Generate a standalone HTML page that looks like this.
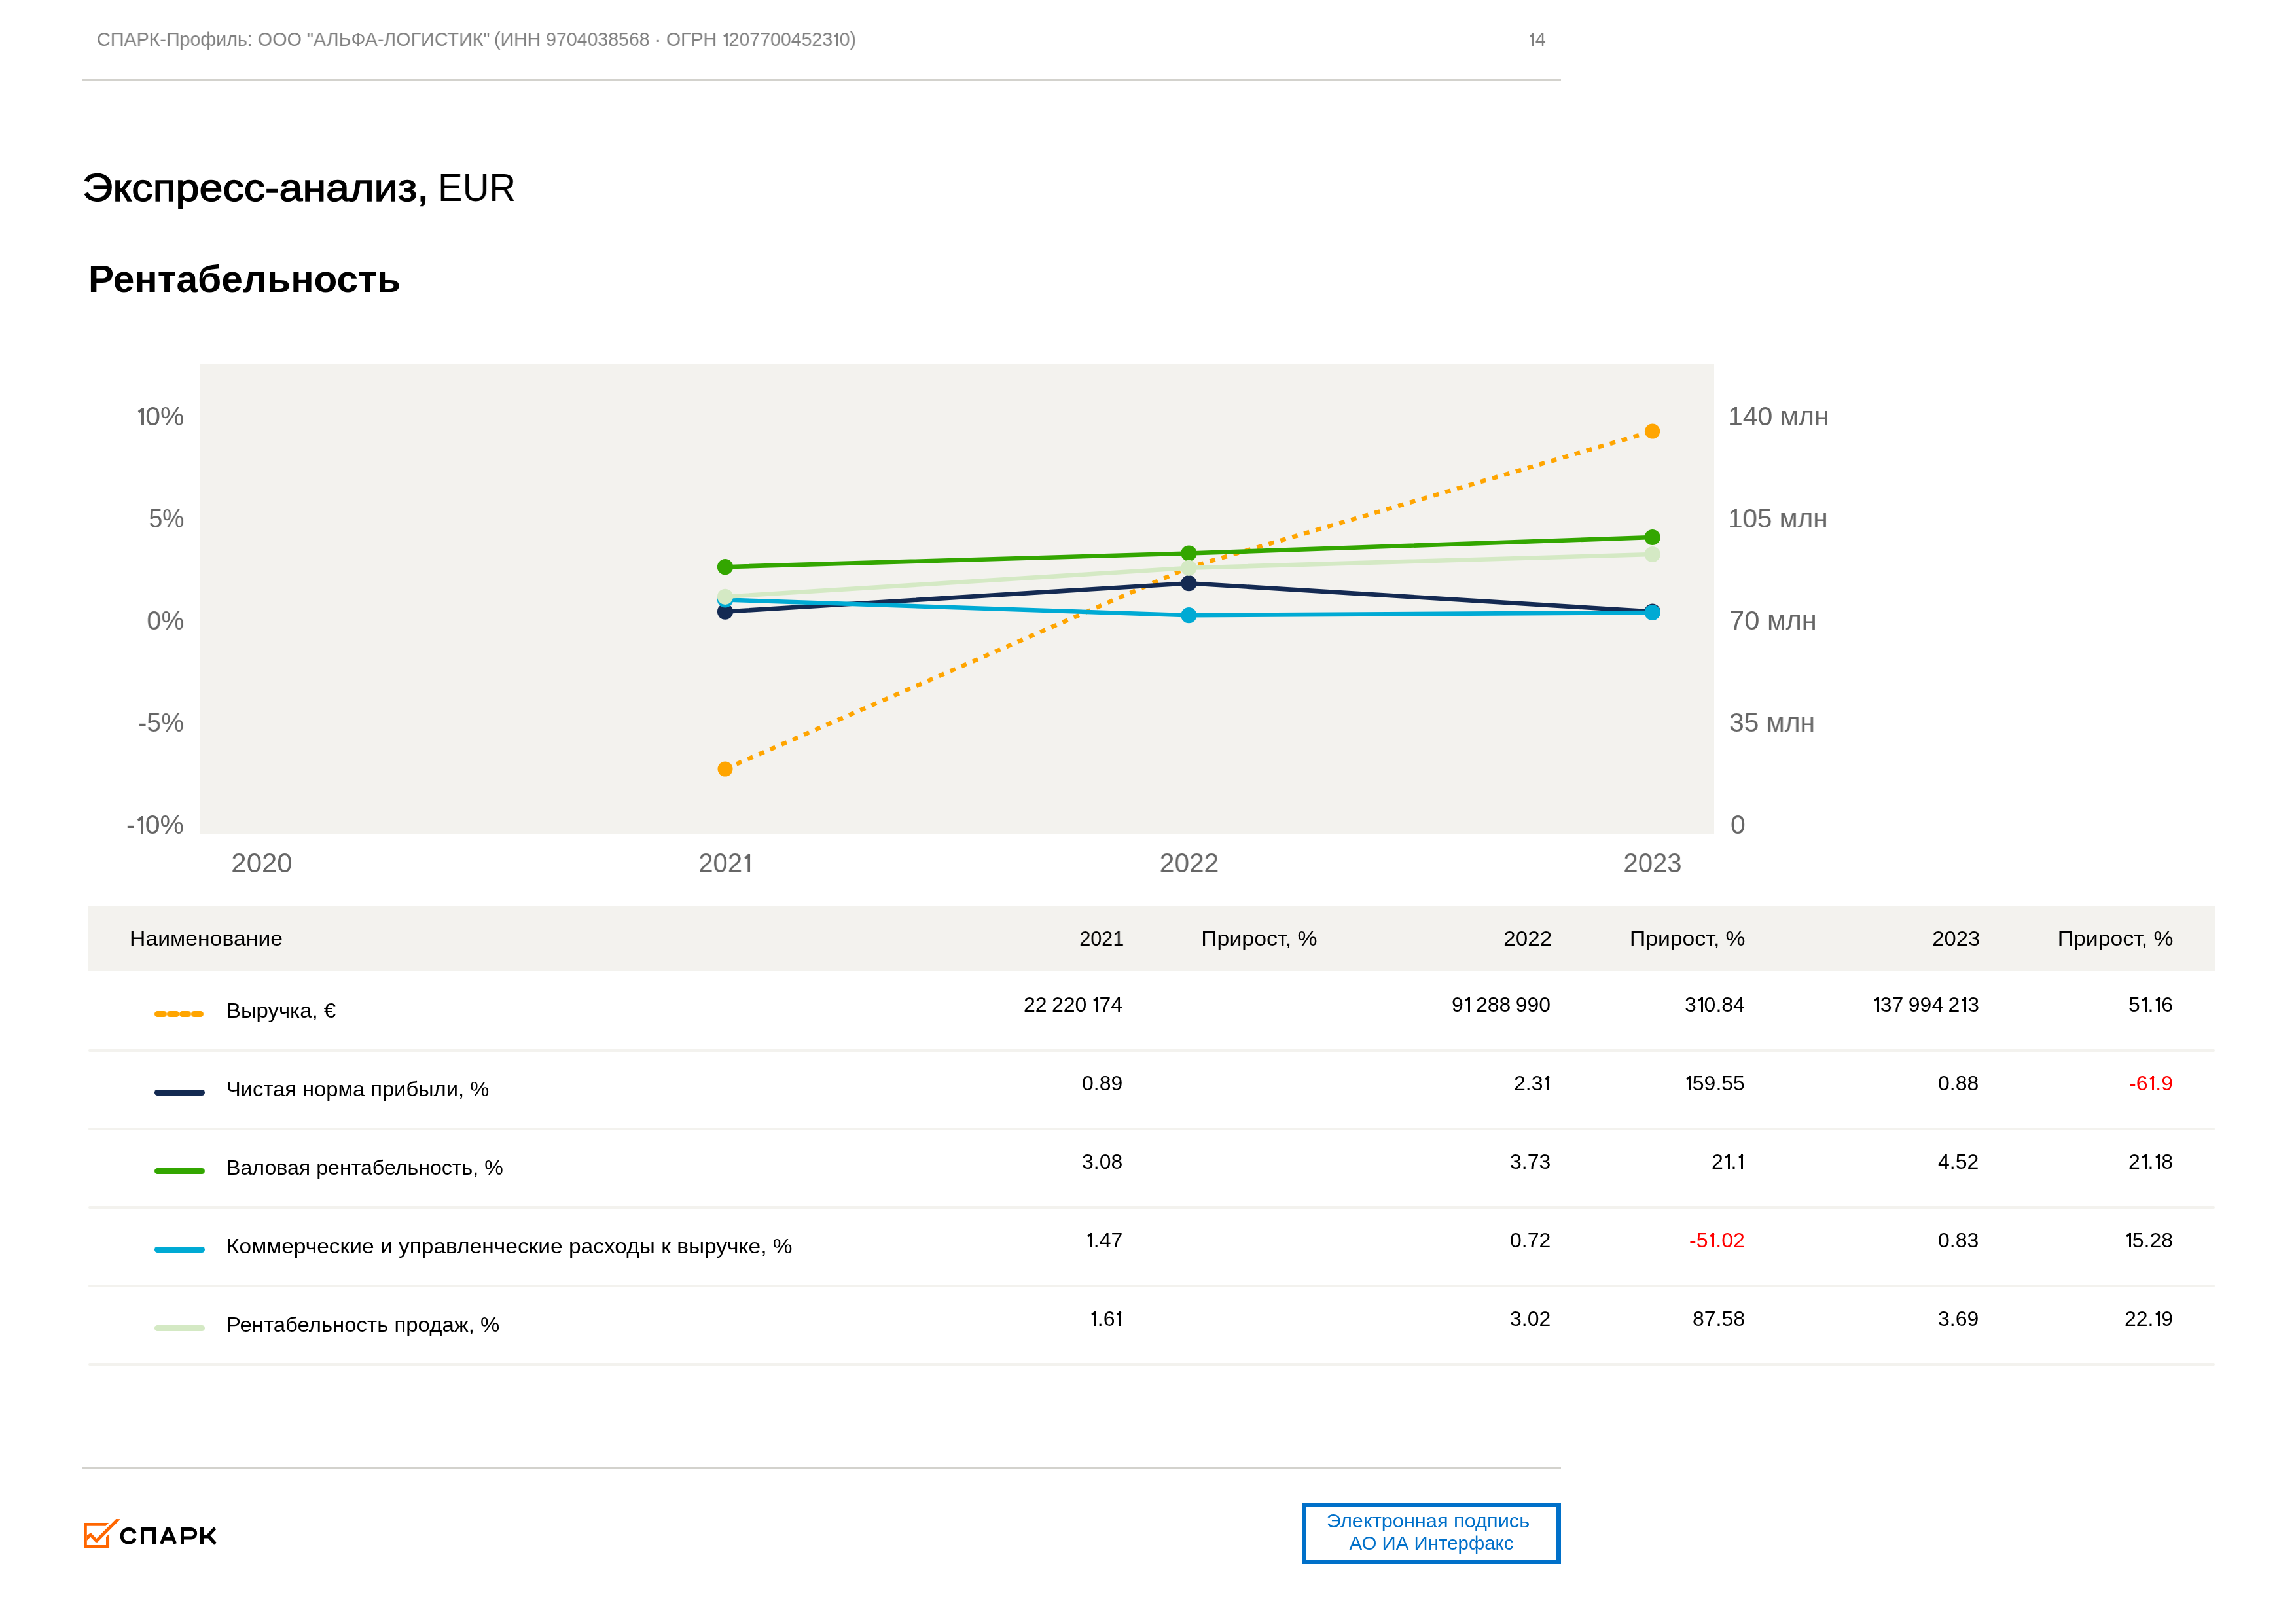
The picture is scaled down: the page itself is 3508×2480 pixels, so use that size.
<!DOCTYPE html>
<html><head><meta charset="utf-8">
<style>
html,body{margin:0;padding:0;background:#fff;}
body{width:3508px;height:2480px;position:relative;overflow:hidden;font-family:"Liberation Sans",sans-serif;}
.t{will-change:transform;position:absolute;white-space:pre;line-height:1;margin:0;}
.l{transform-origin:0 0;}
.r{transform-origin:100% 0;text-align:right;}
.c{transform-origin:50% 0;text-align:center;}
.hd{color:#808080;}
.ax{color:#666;}
.tb{color:#000;}
.neg{color:#f00;}
.sep{position:absolute;left:135px;width:3249px;height:4px;background:#f3f2ee;border-radius:2px;}
.one{display:inline-block;width:0.369em;position:relative;-webkit-text-fill-color:transparent;}.one::before{content:'';position:absolute;left:0.2156em;width:0.0969em;top:0.159em;height:0.68em;background:currentColor;}.one::after{content:'';position:absolute;left:0.0438em;top:0.159em;width:0.206em;height:0.094em;background:currentColor;transform:rotate(-36deg);transform-origin:100% 0;}
</style></head>
<body>
<div class="t l hd" style="left:148px;top:46.45px;font-size:29px;transform:scaleX(0.99)">СПАРК-Профиль: ООО "АЛЬФА-ЛОГИСТИК"</div>
<div class="t l hd" style="left:754.8px;top:46.45px;font-size:29px;transform:scaleX(0.983)">(ИНН 9704038568 · ОГРН <span class="one">1</span>2077004523<span class="one">1</span>0)</div>
<div class="t r hd" style="right:1146px;top:46.45px;font-size:29px;transform:scaleX(1.0)"><span class="one">1</span>4</div>
<div style="position:absolute;left:125px;top:121px;width:2260px;height:3px;background:#d3d2cd;"></div>
<div class="t l" style="left:126px;top:257.20px;font-size:60px;color:#000;-webkit-text-stroke:1.3px #000;transform:scaleX(1.076)">Экспресс-анализ,</div>
<div class="t l" style="left:669px;top:257.20px;font-size:60px;color:#000;transform:scaleX(0.94)">EUR</div>
<div class="t l" style="left:135px;top:396.89px;font-size:58px;font-weight:bold;color:#000;transform:scaleX(1.011)">Рентабельность</div>
<svg style="position:absolute;left:0;top:0" width="3508" height="1400" viewBox="0 0 3508 1400">
<rect x="306" y="556" width="2313" height="719" fill="#f3f2ee"/>
<polyline points="1108,1175 1816.4,867.1 2524.7,659" fill="none" stroke="#ffa500" stroke-width="6.6" stroke-dasharray="8.6 10.14"/>
<g fill="#ffa500"><circle cx="1108" cy="1175" r="11.5"/><circle cx="1816.4" cy="867.1" r="11"/><circle cx="2524.7" cy="659" r="11.5"/></g>
<polyline points="1108,934.6 1816.4,891.2 2524.7,934.5" fill="none" stroke="#142a52" stroke-width="6.6"/>
<g fill="#142a52"><circle cx="1108" cy="934.6" r="12.1"/><circle cx="1816.4" cy="891.2" r="12.1"/><circle cx="2524.7" cy="934.5" r="12.1"/></g>
<polyline points="1108,866.2 1816.4,845.5 2524.7,821" fill="none" stroke="#33a600" stroke-width="6.6"/>
<g fill="#33a600"><circle cx="1108" cy="866.2" r="12.1"/><circle cx="1816.4" cy="845.5" r="12.1"/><circle cx="2524.7" cy="821" r="12.1"/></g>
<polyline points="1108,916.5 1816.4,940.2 2524.7,936" fill="none" stroke="#00aad4" stroke-width="6.6"/>
<g fill="#00aad4"><circle cx="1108" cy="916.5" r="12.1"/><circle cx="1816.4" cy="940.2" r="12.1"/><circle cx="2524.7" cy="936" r="12.1"/></g>
<polyline points="1108,911.8 1816.4,867.8 2524.7,847" fill="none" stroke="#d4e9c4" stroke-width="6.6"/>
<g fill="#d4e9c4"><circle cx="1108" cy="911.8" r="12.1"/><circle cx="1816.4" cy="867.8" r="12.1"/><circle cx="2524.7" cy="847" r="12.1"/></g>
</svg>
<div class="t r ax" style="right:3227px;top:616.29px;font-size:41px;transform:scaleX(1)"><span class="one">1</span>0%</div>
<div class="t r ax" style="right:3227px;top:772.29px;font-size:41px;transform:scaleX(0.905)">5%</div>
<div class="t r ax" style="right:3227px;top:928.29px;font-size:41px;transform:scaleX(0.959)">0%</div>
<div class="t r ax" style="right:3227px;top:1084.29px;font-size:41px;transform:scaleX(0.957)">-5%</div>
<div class="t r ax" style="right:3227px;top:1240.29px;font-size:41px;transform:scaleX(1)">-<span class="one">1</span>0%</div>
<div class="t l ax" style="left:2640px;top:616.29px;font-size:41px;transform:scaleX(1.0)">140 млн</div>
<div class="t l ax" style="left:2640px;top:772.29px;font-size:41px;transform:scaleX(0.987)">105 млн</div>
<div class="t l ax" style="left:2642px;top:928.29px;font-size:41px;transform:scaleX(1.016)">70 млн</div>
<div class="t l ax" style="left:2642px;top:1084.29px;font-size:41px;transform:scaleX(0.995)">35 млн</div>
<div class="t l ax" style="left:2643.5px;top:1240.29px;font-size:41px;transform:scaleX(1.0)">0</div>
<div class="t c ax" style="left:299.6px;width:200px;top:1298.44px;font-size:42px;transform:scaleX(1)">2020</div>
<div class="t c ax" style="left:1007.6px;width:200px;top:1298.44px;font-size:42px;transform:scaleX(0.952)">202<span class="one">1</span></div>
<div class="t c ax" style="left:1716.5px;width:200px;top:1298.44px;font-size:42px;transform:scaleX(0.969)">2022</div>
<div class="t c ax" style="left:2424.8px;width:200px;top:1298.44px;font-size:42px;transform:scaleX(0.956)">2023</div>
<div style="position:absolute;left:134px;top:1385px;width:3251px;height:99px;background:#f3f2ee;"></div>
<div class="t l tb" style="left:198px;top:1417.91px;font-size:32px;transform:scaleX(1.055)">Наименование</div>
<div class="t r tb" style="right:1790.8px;top:1417.91px;font-size:32px;transform:scaleX(0.951)">2021</div>
<div class="t r tb" style="right:1495.0px;top:1417.91px;font-size:32px;transform:scaleX(1.058)">Прирост, %</div>
<div class="t r tb" style="right:1137.0px;top:1417.91px;font-size:32px;transform:scaleX(1.037)">2022</div>
<div class="t r tb" style="right:841.6px;top:1417.91px;font-size:32px;transform:scaleX(1.054)">Прирост, %</div>
<div class="t r tb" style="right:482.6px;top:1417.91px;font-size:32px;transform:scaleX(1.025)">2023</div>
<div class="t r tb" style="right:187.2px;top:1417.91px;font-size:32px;transform:scaleX(1.055)">Прирост, %</div>
<div style="position:absolute;left:236.0px;top:1545px;width:18.8px;height:9px;border-radius:4.5px;background:#ffa500;"></div>
<div style="position:absolute;left:254.8px;top:1545px;width:18.8px;height:9px;border-radius:4.5px;background:#ffa500;"></div>
<div style="position:absolute;left:273.6px;top:1545px;width:18.8px;height:9px;border-radius:4.5px;background:#ffa500;"></div>
<div style="position:absolute;left:292.4px;top:1545px;width:18.8px;height:9px;border-radius:4.5px;background:#ffa500;"></div>
<div class="t l tb" style="left:346px;top:1527.91px;font-size:32px;transform:scaleX(1.028)">Выручка, €</div>
<div class="t r tb" style="right:1792.4px;top:1518.51px;font-size:32px;word-spacing:-1.5px;transform:scaleX(1.0)">22 220 <span class="one">1</span>74</div>
<div class="t r tb" style="right:1139.0px;top:1518.51px;font-size:32px;word-spacing:-1.5px;transform:scaleX(1.0)">9<span class="one">1</span> 288 990</div>
<div class="t r tb" style="right:842.3px;top:1518.51px;font-size:32px;word-spacing:-1.5px;transform:scaleX(1.0)">3<span class="one">1</span>0.84</div>
<div class="t r tb" style="right:484.3px;top:1518.51px;font-size:32px;word-spacing:-1.5px;transform:scaleX(1.0)"><span class="one">1</span>37 994 2<span class="one">1</span>3</div>
<div class="t r tb" style="right:188.1px;top:1518.51px;font-size:32px;word-spacing:-1.5px;transform:scaleX(1.0)">5<span class="one">1</span>.<span class="one">1</span>6</div>
<div class="sep" style="top:1603px;"></div>
<div style="position:absolute;left:236px;top:1665px;width:77px;height:9px;border-radius:4.5px;background:#142a52;"></div>
<div class="t l tb" style="left:346px;top:1647.91px;font-size:32px;transform:scaleX(1.022)">Чистая норма прибыли, %</div>
<div class="t r tb" style="right:1792.4px;top:1638.51px;font-size:32px;word-spacing:-1.5px;transform:scaleX(1.0)">0.89</div>
<div class="t r tb" style="right:1139.0px;top:1638.51px;font-size:32px;word-spacing:-1.5px;transform:scaleX(1.0)">2.3<span class="one">1</span></div>
<div class="t r tb" style="right:842.3px;top:1638.51px;font-size:32px;word-spacing:-1.5px;transform:scaleX(1.0)"><span class="one">1</span>59.55</div>
<div class="t r tb" style="right:484.3px;top:1638.51px;font-size:32px;word-spacing:-1.5px;transform:scaleX(1.0)">0.88</div>
<div class="t r tb neg" style="right:188.1px;top:1638.51px;font-size:32px;word-spacing:-1.5px;transform:scaleX(1.0)">-6<span class="one">1</span>.9</div>
<div class="sep" style="top:1723px;"></div>
<div style="position:absolute;left:236px;top:1785px;width:77px;height:9px;border-radius:4.5px;background:#33a600;"></div>
<div class="t l tb" style="left:346px;top:1767.91px;font-size:32px;transform:scaleX(1.004)">Валовая рентабельность, %</div>
<div class="t r tb" style="right:1792.4px;top:1758.51px;font-size:32px;word-spacing:-1.5px;transform:scaleX(1.0)">3.08</div>
<div class="t r tb" style="right:1139.0px;top:1758.51px;font-size:32px;word-spacing:-1.5px;transform:scaleX(1.0)">3.73</div>
<div class="t r tb" style="right:842.3px;top:1758.51px;font-size:32px;word-spacing:-1.5px;transform:scaleX(1.0)">2<span class="one">1</span>.<span class="one">1</span></div>
<div class="t r tb" style="right:484.3px;top:1758.51px;font-size:32px;word-spacing:-1.5px;transform:scaleX(1.0)">4.52</div>
<div class="t r tb" style="right:188.1px;top:1758.51px;font-size:32px;word-spacing:-1.5px;transform:scaleX(1.0)">2<span class="one">1</span>.<span class="one">1</span>8</div>
<div class="sep" style="top:1843px;"></div>
<div style="position:absolute;left:236px;top:1905px;width:77px;height:9px;border-radius:4.5px;background:#00aad4;"></div>
<div class="t l tb" style="left:346px;top:1887.91px;font-size:32px;transform:scaleX(1.047)">Коммерческие и управленческие расходы к выручке, %</div>
<div class="t r tb" style="right:1792.4px;top:1878.51px;font-size:32px;word-spacing:-1.5px;transform:scaleX(1.0)"><span class="one">1</span>.47</div>
<div class="t r tb" style="right:1139.0px;top:1878.51px;font-size:32px;word-spacing:-1.5px;transform:scaleX(1.0)">0.72</div>
<div class="t r tb neg" style="right:842.3px;top:1878.51px;font-size:32px;word-spacing:-1.5px;transform:scaleX(1.0)">-5<span class="one">1</span>.02</div>
<div class="t r tb" style="right:484.3px;top:1878.51px;font-size:32px;word-spacing:-1.5px;transform:scaleX(1.0)">0.83</div>
<div class="t r tb" style="right:188.1px;top:1878.51px;font-size:32px;word-spacing:-1.5px;transform:scaleX(1.0)"><span class="one">1</span>5.28</div>
<div class="sep" style="top:1963px;"></div>
<div style="position:absolute;left:236px;top:2025px;width:77px;height:9px;border-radius:4.5px;background:#d4e9c4;"></div>
<div class="t l tb" style="left:346px;top:2007.91px;font-size:32px;transform:scaleX(1.029)">Рентабельность продаж, %</div>
<div class="t r tb" style="right:1792.4px;top:1998.51px;font-size:32px;word-spacing:-1.5px;transform:scaleX(1.0)"><span class="one">1</span>.6<span class="one">1</span></div>
<div class="t r tb" style="right:1139.0px;top:1998.51px;font-size:32px;word-spacing:-1.5px;transform:scaleX(1.0)">3.02</div>
<div class="t r tb" style="right:842.3px;top:1998.51px;font-size:32px;word-spacing:-1.5px;transform:scaleX(1.0)">87.58</div>
<div class="t r tb" style="right:484.3px;top:1998.51px;font-size:32px;word-spacing:-1.5px;transform:scaleX(1.0)">3.69</div>
<div class="t r tb" style="right:188.1px;top:1998.51px;font-size:32px;word-spacing:-1.5px;transform:scaleX(1.0)">22.<span class="one">1</span>9</div>
<div class="sep" style="top:2083px;"></div>
<div style="position:absolute;left:125px;top:2241px;width:2260px;height:4px;background:#d3d2cd;"></div>
<svg style="position:absolute;left:0;top:2300px" width="400" height="100" viewBox="0 2300 400 100">
<path fill="#ff6600" d="M128,2327 L166.05,2327 L161.6,2331.8 L132.8,2331.8 L132.8,2361.05 L162,2361.05 L162,2348.2 L167.05,2343.8 L167.05,2365.9 L128,2365.9 Z"/>
<path fill="#ff6600" d="M132.8,2346.2 L137.4,2343 L139.6,2343 L147.4,2351 L177.3,2321 L184.1,2321.2 L148.8,2356.8 L146.2,2356.8 L138.4,2348.8 L136,2350.8 L132.8,2354 Z"/>
<g fill="none" stroke="#000" stroke-width="5">
<path d="M206.3,2343.2 A10.4,10.6 0 1 0 206.3,2350.6"/>
<path d="M217.5,2359 V2336.5 H235.5 V2359"/>
<path d="M246.5,2359 L256,2336.5 H258.5 L267.8,2359 M250,2351.3 H264.5"/>
<path d="M278.5,2359 V2336.5 H292 A6.7,6.7 0 0 1 292,2349.9 H278.5"/>
<path d="M308.5,2334 V2359 M308.5,2348 H318 M328.5,2335 L318,2346.5 L329,2359"/>
</g>
</svg>
<div style="position:absolute;left:1989px;top:2296px;width:382px;height:80px;border:7px solid #0070c9;"></div>
<div class="t c" style="left:1982px;width:400px;top:2310.45px;font-size:29px;color:#0070c9;transform:scaleX(1.059)">Электронная подпись</div>
<div class="t c" style="left:1987px;width:400px;top:2343.75px;font-size:29px;color:#0070c9;transform:scaleX(1.016)">АО ИА Интерфакс</div>
</body></html>
